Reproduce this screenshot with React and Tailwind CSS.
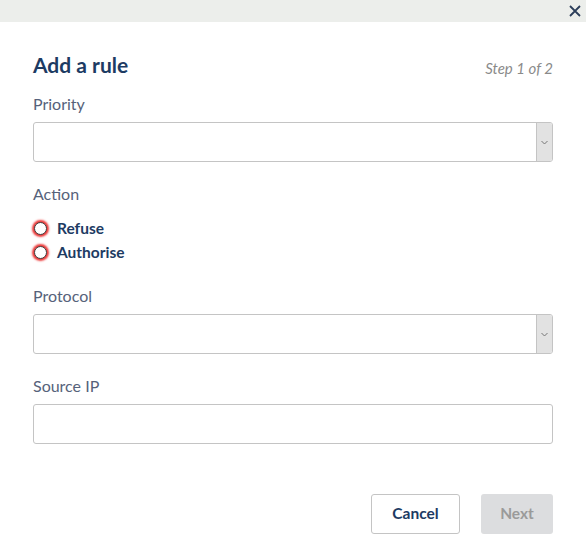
import React from "react";

function Select() {
  return (
    <div className="flex h-[40px] w-full rounded-[3px] border border-[#c4c4c4] bg-white overflow-hidden">
      <div className="flex-1" />
      <div className="flex w-[16px] items-center justify-center border-l border-[#c4c4c4] bg-[#e2e2e2]">
        <svg width="7" height="5" viewBox="0 0 7 5" fill="none">
          <path d="M0.5 1 L3.5 4 L6.5 1" stroke="#777" strokeWidth="1" />
        </svg>
      </div>
    </div>
  );
}

function Radio({ label }) {
  return (
    <label className="flex h-[24px] items-center gap-[10px]">
      <span className="ml-[1px] block h-[13px] w-[13px] rounded-full border-[1.5px] border-[#3f3f3f] bg-white shadow-[0_0_2px_2px_rgba(235,45,45,0.95)]" />
      <span className="text-[15.5px] leading-[20px] font-bold text-[#1d3b63]">{label}</span>
    </label>
  );
}

export default function App() {
  return (
    <div
      className="h-[559px] w-[586px] bg-white"
      style={{ fontFamily: "Lato, 'Open Sans', sans-serif" }}
    >
      <div className="flex h-[22px] items-center justify-end bg-[#eceeeb] pr-[5px]">
        <svg width="12" height="12" viewBox="0 0 12 12">
          <path d="M1 1 L11 11 M11 1 L1 11" stroke="#2c3e5a" strokeWidth="1.8" />
        </svg>
      </div>
      <div className="px-[33px]">
        <div className="mt-[31px] flex h-[24px] items-center justify-between">
          <h1 className="text-[21px] leading-[24px] font-bold text-[#1d3b63]">Add a rule</h1>
          <span className="mt-[5px] text-[15px] leading-[20px] italic text-[#8a8a8a]">Step 1 of 2</span>
        </div>
        <div className="mt-[17px] text-[16px] leading-[20px] text-[#56627a]">Priority</div>
        <div className="mt-[8px]">
          <Select />
        </div>
        <div className="mt-[22px] text-[16px] leading-[20px] text-[#56627a]">Action</div>
        <div className="mt-[12px] flex flex-col">
          <Radio label="Refuse" />
          <Radio label="Authorise" />
        </div>
        <div className="mt-[22px] text-[16px] leading-[20px] text-[#56627a]">Protocol</div>
        <div className="mt-[8px]">
          <Select />
        </div>
        <div className="mt-[22px] text-[16px] leading-[20px] text-[#56627a]">Source IP</div>
        <div className="mt-[8px] h-[40px] w-full rounded-[3px] border border-[#c4c4c4] bg-white" />
        <div className="mt-[50px] flex justify-end gap-[21px]">
          <button className="h-[40px] w-[89px] rounded-[3px] border border-[#c4c4c4] bg-white text-[15.5px] font-bold text-[#1d3b63]">
            Cancel
          </button>
          <button className="h-[40px] w-[72px] rounded-[3px] bg-[#dcdddf] text-[15.5px] font-bold text-[#9a9a9a]">
            Next
          </button>
        </div>
      </div>
    </div>
  );
}
